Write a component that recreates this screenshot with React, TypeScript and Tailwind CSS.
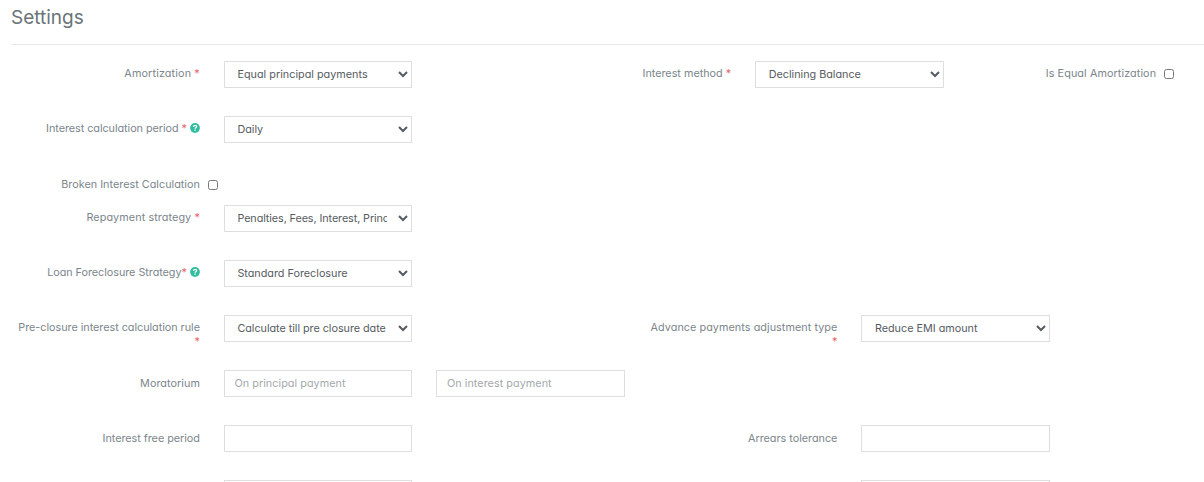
import type { ReactNode } from "react";

const FIELD =
  "block h-[27px] w-full border border-[#dddee0] bg-white text-[#565b61] outline-none rounded-none";

type LabelProps = { children?: ReactNode; className?: string; top?: string; tracking?: string };

function Label({ children, className = "col-span-2", top = "pt-[6px]", tracking = "" }: LabelProps) {
  return (
    <div className={`${className} ${top} px-3 text-right leading-[14px] ${tracking}`}>
      {children}
    </div>
  );
}

function Required() {
  return <span className="text-[#e8636b]">*</span>;
}

function Help() {
  return (
    <svg viewBox="0 0 512 512" className="-mt-[3px] ml-[3px] inline-block size-[10px] align-middle">
      <circle cx="256" cy="256" r="250" fill="#2fbd9f" />
      <path d="M174 196c8-50 42-76 86-76 47 0 80 27 80 67 0 56-79 55-79 111" fill="none" stroke="#fff" strokeWidth="66" />
      <circle cx="258" cy="372" r="40" fill="#fff" />
    </svg>
  );
}

function Select({ value, tracking = "" }: { value: string; tracking?: string }) {
  return (
    <div className="col-span-2 px-3">
      <select className={`${FIELD} pl-[8.5px] pr-2 ${tracking}`} defaultValue={value}>
        <option>{value}</option>
      </select>
    </div>
  );
}

function Input({ placeholder }: { placeholder?: string }) {
  return (
    <div className="col-span-2 px-3">
      <input
        type="text"
        placeholder={placeholder}
        className={`${FIELD} px-[9.5px] tracking-[0.05px] placeholder:text-[#a4a8ab]`}
      />
    </div>
  );
}

function Checkbox({ top = "pt-2", shift = "-ml-[3.6px]" }: { top?: string; shift?: string }) {
  return (
    <div className={top}>
      <input type="checkbox" className={`${shift} block size-[10px]`} />
    </div>
  );
}

function Row({ children, height = "h-[55px]" }: { children: ReactNode; height?: string }) {
  return <div className={`-ml-[0.6px] grid w-[1275px] shrink-0 grid-cols-12 items-start ${height}`}>{children}</div>;
}

export default function App() {
  return (
    <main className="flex h-[482px] w-[1204px] flex-col overflow-hidden bg-white font-['Inter','Noto_Sans',sans-serif] text-[10.8px] text-[#7b868c] [font-feature-settings:'cv11']">
      <header className="ml-[11px] h-[45px] shrink-0 border-b border-[#e9eaeb]">
        <h1 className="pt-[6px] text-[19px] leading-6 text-[#6a7479]">Settings</h1>
      </header>
      <form className="flex flex-col pt-4">
        <Row>
          <Label tracking="tracking-[0.14px]">Amortization <Required /></Label>
          <Select value="Equal principal payments" tracking="tracking-[0.02px]" />
          <Label className="col-span-3">Interest method <Required /></Label>
          <Select value="Declining Balance" />
          <Label tracking="tracking-[0.09px]">Is Equal Amortization</Label>
          <Checkbox shift="-ml-[4.4px]" />
        </Row>
        <Row>
          <Label tracking="tracking-[-0.04px]">Interest calculation period <Required /><Help /></Label>
          <Select value="Daily" />
        </Row>
        <Row height="h-[34px]">
          <Label top="pt-[7px]" tracking="tracking-[0.02px]">Broken Interest Calculation</Label>
          <Checkbox top="pt-[9px]" />
        </Row>
        <Row>
          <Label tracking="tracking-[0.09px]">Repayment strategy <Required /></Label>
          <Select value="Penalties, Fees, Interest, Principal order" tracking="tracking-[-0.09px]" />
        </Row>
        <Row>
          <Label tracking="tracking-[-0.03px]">Loan Foreclosure Strategy<Required /><Help /></Label>
          <Select value="Standard Foreclosure" />
        </Row>
        <Row>
          <Label tracking="tracking-[-0.02px]">Pre-closure interest calculation rule <Required /></Label>
          <Select value="Calculate till pre closure date" tracking="tracking-[-0.03px]" />
          <Label className="col-start-7 col-span-2" tracking="tracking-[0.06px]">Advance payments adjustment type <Required /></Label>
          <Select value="Reduce EMI amount" />
        </Row>
        <Row>
          <Label top="pt-[7px]" tracking="tracking-[0.05px]">Moratorium</Label>
          <Input placeholder="On principal payment" />
          <Input placeholder="On interest payment" />
        </Row>
        <Row>
          <Label top="pt-[7px]" tracking="tracking-[-0.02px]">Interest free period</Label>
          <Input />
          <Label className="col-start-7 col-span-2" top="pt-[7px]">Arrears tolerance</Label>
          <Input />
        </Row>
        <Row>
          <Label />
          <Input />
          <Label className="col-start-7 col-span-2" />
          <Input />
        </Row>
      </form>
    </main>
  );
}
